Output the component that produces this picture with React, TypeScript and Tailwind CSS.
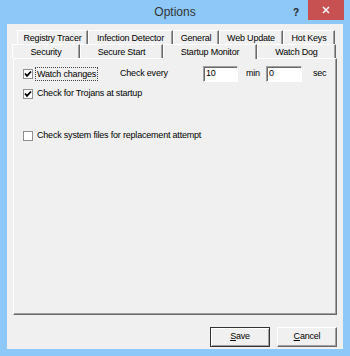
import React from 'react';

const row1 = [
  { label: 'Registry Tracer', w: 71 },
  { label: 'Infection Detector', w: 85 },
  { label: 'General', w: 46 },
  { label: 'Web Update', w: 64 },
  { label: 'Hot Keys', w: 52 },
];

const row2 = [
  { label: 'Security', w: 68 },
  { label: 'Secure Start', w: 83 },
  { label: 'Startup Monitor', w: 94, active: true },
  { label: 'Watch Dog', w: 79 },
];

function Tab({ label, w, active }: { label: string; w: number; active?: boolean }) {
  if (active) {
    return (
      <div
        className="relative z-10 -mb-px flex h-[15px] items-start justify-center border-l border-t border-white bg-[#f0f0f0] pt-px shadow-[inset_-1px_0_0_#a0a0a0] border-r border-r-[#696969]"
        style={{ width: w }}
      >
        {label}
      </div>
    );
  }
  return (
    <div
      className="flex h-[14px] items-center justify-center border-l border-t border-white pt-[2px] shadow-[inset_-1px_0_0_#a0a0a0] border-r border-r-[#696969]"
      style={{ width: w }}
    >
      {label}
    </div>
  );
}

function Checkbox({ checked }: { checked?: boolean }) {
  return (
    <div className="flex h-[10px] w-[10px] shrink-0 items-center justify-center border border-[#8f8f8f] bg-white">
      {checked && (
        <svg width="8" height="8" viewBox="0 0 8 8">
          <path d="M1 3.5 L3 5.8 L7 1.5" stroke="#000" strokeWidth="1.8" fill="none" />
        </svg>
      )}
    </div>
  );
}

function Input({ value, w }: { value: string; w: number }) {
  return (
    <div
      className="flex h-[16px] items-center border-l border-t border-[#a0a0a0] border-b border-r border-b-white border-r-white bg-white pl-[2px] shadow-[inset_1px_1px_0_#696969]"
      style={{ width: w }}
    >
      {value}
    </div>
  );
}

function Button({ children, def }: { children: React.ReactNode; def?: boolean }) {
  return (
    <div
      className={
        'flex h-[20px] w-[60px] items-center justify-center bg-[#f0f0f0] ' +
        (def
          ? 'border border-[#333] shadow-[inset_1px_1px_0_#fff,inset_-1px_-1px_0_#a0a0a0]'
          : 'border border-t-white border-l-white border-b-[#696969] border-r-[#696969] shadow-[inset_-1px_-1px_0_#a0a0a0]')
      }
    >
      {children}
    </div>
  );
}

export default function App() {
  return (
    <div className="flex h-[356px] w-[350px] flex-col bg-[#8dc8f8] font-['Liberation_Sans',Arial,sans-serif] text-[9px] tracking-[-0.2px] text-black">
      {/* Title bar */}
      <div className="relative flex h-[24px] shrink-0 items-center justify-center">
        <span className="text-[12px] tracking-normal text-[#333]">Options</span>
        <span className="absolute left-[293px] top-[5px] text-[10px] font-bold text-[#222]">?</span>
        <div className="absolute right-[6px] top-0 flex h-[20px] w-[36px] items-center justify-center bg-[#c75050]">
          <svg width="8" height="8" viewBox="0 0 8 8">
            <path d="M1 1 L7 7 M7 1 L1 7" stroke="#fff" strokeWidth="1.5" />
          </svg>
        </div>
      </div>

      {/* Client area */}
      <div className="mx-[7px] mb-[7px] flex flex-1 flex-col bg-[#f0f0f0] px-[6px] pt-[6px]">
        <div className="ml-[4px] flex">
          {row1.map((t) => (
            <Tab key={t.label} {...t} />
          ))}
        </div>
        <div className="-ml-px flex">
          {row2.map((t) => (
            <Tab key={t.label} {...t} />
          ))}
        </div>

        {/* Panel */}
        <div className="flex h-[257px] flex-col border border-l-white border-t-white border-b-[#696969] border-r-[#696969] px-[9px] pt-[7px] shadow-[inset_-1px_-1px_0_#a0a0a0]">
          <div className="flex h-[16px] items-center">
            <div className="flex w-[97px] items-center">
              <Checkbox checked />
              <span className="ml-[2px] border border-dotted border-[#444] px-[1px] leading-[12px]">Watch changes</span>
            </div>
            <span className="w-[83px]">Check every</span>
            <Input value="10" w={35} />
            <span className="w-[28px] pl-[8px]">min</span>
            <Input value="0" w={36} />
            <span className="ml-[11px]">sec</span>
          </div>
          <div className="mt-[4px] flex h-[16px] items-center">
            <Checkbox checked />
            <span className="ml-[4px]">Check for Trojans at startup</span>
          </div>
          <div className="mt-[26px] flex h-[16px] items-center">
            <Checkbox />
            <span className="ml-[4px]">Check system files for replacement attempt</span>
          </div>
        </div>

        {/* Buttons */}
        <div className="mt-[12px] flex justify-end gap-[7px]">
          <Button def>
            <span>
              <u>S</u>ave
            </span>
          </Button>
          <Button>
            <span>
              <u>C</u>ancel
            </span>
          </Button>
        </div>
      </div>
    </div>
  );
}
